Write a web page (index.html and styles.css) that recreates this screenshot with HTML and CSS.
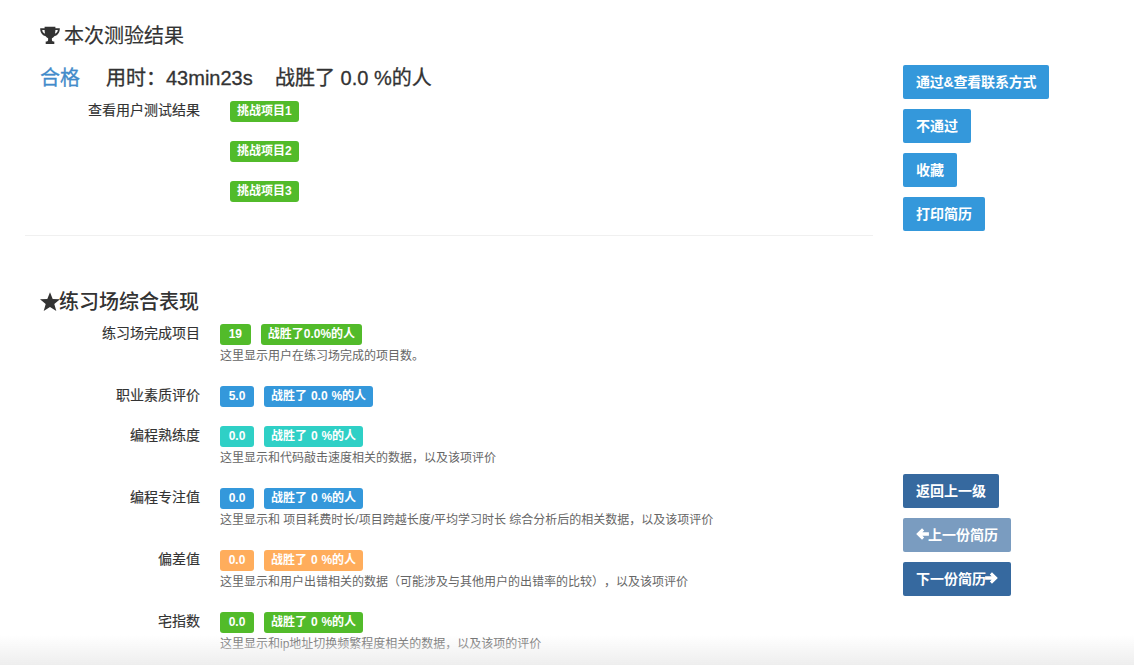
FILE: index.html
```html
<!DOCTYPE html>
<html lang="zh-CN">
<head>
    <meta charset="UTF-8">
    <title>本次测验结果</title>
    <link rel="stylesheet" href="styles.css">
</head>
<body>
    <div class="page">
        <div class="main">
            <section class="result">
                <h3 class="title title-trophy">
                    <svg class="icon-trophy" viewBox="0 0 20 20"><path d="M4.600.8h10.800v1.400h4.400c.1 3.800-1.700 7.100-5.500 8-.7 1-1.500 1.600-2.400 2v1.900c0 1 1.100 1.500 2.400 1.500v2.400H5.700v-2.400c1.300 0 2.400-.5 2.400-1.500v-1.900c-.9-.4-1.700-1-2.400-2C1.900 9.300.1 6 .2 2.200h4.400V.8zM2.200 3.900c.2 1.700 1 3 2.900 3.800-.3-1.200-.5-2.500-.5-3.800H2.200zm15.600 0h-2.400c0 1.300-.2 2.600-.5 3.800 1.900-.8 2.700-2.100 2.900-3.800z"/></svg>
                    本次测验结果
                </h3>
                <div class="summary">
                    <span class="pass">合格</span>
                    <span class="time">用时：43min23s</span>
                    <span>战胜了 0.0 %的人</span>
                </div>
                <div class="tests">
                    <div class="tests-label">查看用户测试结果</div>
                    <div class="tests-list">
                        <span class="badge green">挑战项目1</span>
                        <span class="badge green">挑战项目2</span>
                        <span class="badge green">挑战项目3</span>
                    </div>
                </div>
            </section>
            <hr class="divider">
            <section class="practice">
                <h3 class="title">
                    <svg class="icon-star" viewBox="0 0 20 20"><path d="M10 .2l2.700 6.700 7.300.4-5.700 4.600 2 7.100L10 15l-6.300 4 2-7.100L0 7.300l7.300-.4z"/></svg>练习场综合表现
                </h3>
                <div class="row row-first">
                    <div class="row-label">练习场完成项目</div>
                    <div class="row-body">
                        <div class="badges"><span class="badge num green">19</span><span class="badge green">战胜了0.0%的人</span></div>
                        <p class="desc">这里显示用户在练习场完成的项目数。</p>
                    </div>
                </div>
                <div class="row row-short">
                    <div class="row-label">职业素质评价</div>
                    <div class="row-body">
                        <div class="badges"><span class="badge num blue">5.0</span><span class="badge blue">战胜了 0.0 %的人</span></div>
                    </div>
                </div>
                <div class="row">
                    <div class="row-label">编程熟练度</div>
                    <div class="row-body">
                        <div class="badges"><span class="badge num teal">0.0</span><span class="badge teal">战胜了 0 %的人</span></div>
                        <p class="desc">这里显示和代码敲击速度相关的数据，以及该项评价</p>
                    </div>
                </div>
                <div class="row">
                    <div class="row-label">编程专注值</div>
                    <div class="row-body">
                        <div class="badges"><span class="badge num blue">0.0</span><span class="badge blue">战胜了 0 %的人</span></div>
                        <p class="desc">这里显示和 项目耗费时长/项目跨越长度/平均学习时长 综合分析后的相关数据，以及该项评价</p>
                    </div>
                </div>
                <div class="row">
                    <div class="row-label">偏差值</div>
                    <div class="row-body">
                        <div class="badges"><span class="badge num orange">0.0</span><span class="badge orange">战胜了 0 %的人</span></div>
                        <p class="desc">这里显示和用户出错相关的数据（可能涉及与其他用户的出错率的比较），以及该项评价</p>
                    </div>
                </div>
                <div class="row">
                    <div class="row-label">宅指数</div>
                    <div class="row-body">
                        <div class="badges"><span class="badge num green">0.0</span><span class="badge green">战胜了 0 %的人</span></div>
                        <p class="desc">这里显示和ip地址切换频繁程度相关的数据，以及该项的评价</p>
                    </div>
                </div>
            </section>
        </div>
        <aside class="side">
            <div class="btn-group">
                <button class="btn contact">通过&amp;查看联系方式</button>
                <button class="btn">不通过</button>
                <button class="btn">收藏</button>
                <button class="btn">打印简历</button>
            </div>
            <div class="btn-group btn-group-nav">
                <button class="btn dark">返回上一级</button>
                <button class="btn dark disabled"><svg class="icon-arrow arrow-left" viewBox="0 0 14 14"><path d="M6.500 .8L8.800 3.100 6.900 5H13.900v4H6.900L8.800 10.900 6.500 13.200 .2 7z"/></svg>上一份简历</button>
                <button class="btn dark">下一份简历<svg class="icon-arrow arrow-right" viewBox="0 0 14 14"><path d="M7.500 .8L5.200 3.100 7.100 5H.1v4H7.100L5.200 10.900 7.500 13.200 13.800 7z"/></svg></button>
            </div>
        </aside>
    </div>
    <div class="fade"></div>
</body>
</html>
```

FILE: styles.css
```css
* { box-sizing: border-box; }
html, body { height: 100%; }
body { margin: 0; height: 665px; overflow: hidden; background: #fff; color: #333; font-family: "Liberation Sans", "Noto Sans CJK SC", sans-serif; font-size: 14px; text-spacing-trim: space-all; }
.page { display: flex; padding-left: 25px; }
.main { width: 848px; }
.title { display: flex; align-items: center; margin: 0; font-size: 20px; font-weight: 500; line-height: 22px; }
.title-trophy { font-weight: 400; -webkit-text-stroke: .2px #333; }
.result { padding: 25px 15px 0; height: 235px; }
.icon-trophy { width: 20px; height: 20px; margin-right: 4px; fill: #333; }
.summary { display: flex; margin-top: 20px; font-size: 20px; font-weight: 400; line-height: 22px; -webkit-text-stroke: .3px; }
.pass { width: 66px; color: #428bca; }
.time { width: 169px; }
.tests { display: flex; margin-top: 11px; }
.tests-label { width: 190px; padding-left: 48px; line-height: 20px; -webkit-text-stroke: .15px; }
.tests-list { display: flex; flex-direction: column; align-items: flex-start; gap: 19px; margin-top: 1px; }
.divider { margin: 0; border: 0; border-top: 1px solid #f0f0f0; }
.practice { padding: 55px 15px 0; }
.icon-star { width: 20px; height: 20px; margin-right: -1px; fill: #333; }
.row { display: flex; margin-bottom: 20px; height: 42px; }
.row-short { height: 20px; }
.row-first { margin-top: 11px; }
.row-label { width: 160px; text-align: right; line-height: 18px; -webkit-text-stroke: .15px; }
.row-body { margin-left: 20px; }
.badges { display: flex; gap: 10px; }
.badge { display: inline-block; height: 21px; padding: 0 7px; border-radius: 3px; color: #fff; font-size: 12px; font-weight: 700; line-height: 20px; white-space: nowrap; word-spacing: .5px; }
.num { padding: 0 8.7px; }
.green { background: #52bb2a; }
.blue { background: #3498db; }
.teal { background: #2fd0c6; }
.orange { background: #ffad5c; }
.desc { margin: 3px 0 0; color: #666; font-size: 12px; line-height: 17px; white-space: nowrap; }
.side { margin-left: 30px; padding-top: 65px; }
.btn-group { display: flex; flex-direction: column; align-items: flex-start; gap: 10px; }
.btn-group-nav { margin-top: 243px; }
.btn { display: flex; align-items: center; height: 34px; padding: 0 13px 2px; border: 0; border-radius: 2px; background: #3498db; color: #fff; font-family: inherit; font-size: 14px; font-weight: 700; white-space: nowrap; }
.contact { letter-spacing: -.2px; }
.dark { background: #36699f; }
.disabled { background: #7a9cc0; }
.icon-arrow { width: 13px; height: 14px; fill: #fff; }
.arrow-left { margin-right: -1px; }
.arrow-right { margin-left: -1px; }
.fade { position: fixed; left: 0; right: 0; bottom: 0; height: 30px; background: linear-gradient(rgba(238,238,238,0), #eee); pointer-events: none; }
```
